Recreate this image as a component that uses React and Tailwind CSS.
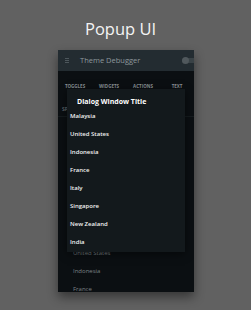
import React from "react";

const bgList = ["Malaysia", "United States", "Indonesia", "France"];
const dlgList = ["Malaysia", "United States", "Indonesia", "France", "Italy", "Singapore", "New Zealand", "India"];

export default function App() {
  return (
    <div
      className="w-[251px] h-[310px] bg-[#616161] flex flex-col items-center overflow-hidden"
      style={{ fontFamily: '"Open Sans", "Noto Sans", sans-serif' }}
    >
      <div className="pt-[19px] h-[50px] leading-[20px] text-[16.5px] text-[#f4f4f4] mr-[10px]">Popup UI</div>
      <div className="relative w-[136px] h-[242px] ml-[1px] bg-[#0b0f12] shadow-[0_5px_10px_rgba(0,0,0,0.45)] overflow-hidden">
        {/* app bar */}
        <div className="h-[21px] bg-[#232c31] flex items-center pl-[7px]">
          <div className="flex flex-col gap-[1px] w-[4px]">
            <div className="h-[1px] bg-[#4d575c]" />
            <div className="h-[1px] bg-[#4d575c]" />
            <div className="h-[1px] bg-[#4d575c]" />
          </div>
          <div className="ml-[11px] text-[7.5px] text-[#8d979c] leading-none">Theme Debugger</div>
          <div className="ml-auto relative w-[16px] h-[5px] rounded-full bg-[#394246] mr-[-4px] flex items-center">
            <div className="w-[7px] h-[7px] rounded-full bg-[#50585c]" />
          </div>
        </div>
        {/* tabs */}
        <div className="h-[30px] grid grid-cols-4 items-center text-[4.5px] font-bold text-[#8a9296] leading-none">
          <div className="text-center">TOGGLES</div>
          <div className="text-center">WIDGETS</div>
          <div className="text-center">ACTIONS</div>
          <div className="text-center">TEXT</div>
        </div>
        {/* content */}
        <div className="flex flex-col">
          <div className="mt-[3px] h-[10px] leading-[10px] pl-[4px] text-[5px] font-semibold text-[#6f777b]">SPINNER</div>
          <div className="h-[1px] bg-[#151b1e] mt-[2px]" />
          <div className="flex flex-col mt-[109px] pl-[15px]">
            {bgList.map((c) => (
              <div key={c} className="h-[18px] leading-[18px] text-[6px] text-[#7b8286]">{c}</div>
            ))}
          </div>
        </div>
        {/* dialog */}
        <div className="absolute left-[9px] top-[39px] w-[118px] h-[163px] bg-[#13191c] shadow-[0_2px_8px_rgba(0,0,0,0.5)] flex flex-col">
          <div className="pt-[6px] pl-[10px] leading-[14px] text-[7px] font-bold text-white">Dialog Window Title</div>
          <div className="flex flex-col mt-[-2px] pl-[3px]">
            {dlgList.map((c) => (
              <div key={c} className="h-[18px] leading-[18px] text-[6px] font-semibold text-[#f2f2f2]">{c}</div>
            ))}
          </div>
        </div>
      </div>
    </div>
  );
}
